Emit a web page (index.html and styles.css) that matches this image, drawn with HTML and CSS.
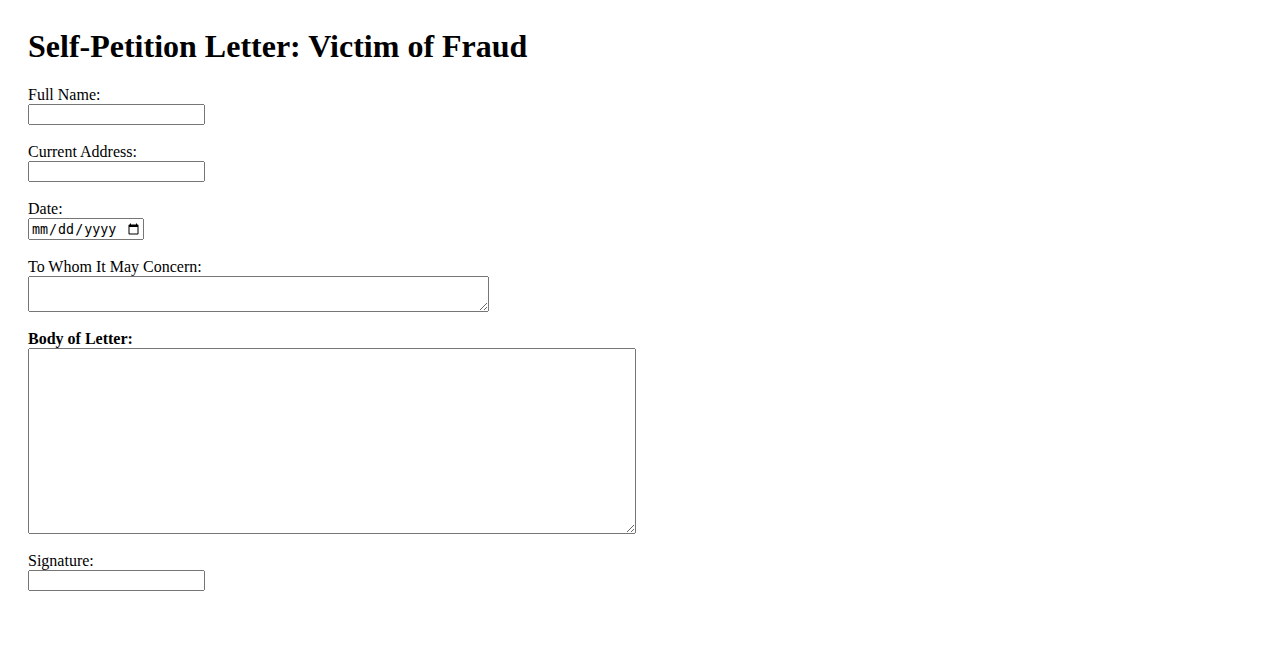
FILE: index.html
```html
<!DOCTYPE html>
<html lang="en">
<head>
<meta charset="utf-8">
<title>Self-Petition Letter: Victim of Fraud</title>
<link rel="stylesheet" href="styles.css">
</head>
<body>
<h1 class="title">Self-Petition Letter: Victim of Fraud</h1>
<form class="letter">
  <div class="field">
    <label class="label" for="fullname">Full Name:</label>
    <input class="text" type="text" id="fullname">
  </div>
  <div class="field">
    <label class="label" for="address">Current Address:</label>
    <input class="text" type="text" id="address">
  </div>
  <div class="field">
    <label class="label" for="date">Date:</label>
    <input class="date" type="date" id="date">
  </div>
  <div class="field">
    <label class="label" for="whom">To Whom It May Concern:</label>
    <textarea class="area area-short" id="whom" rows="2"></textarea>
  </div>
  <div class="field">
    <label class="label label-bold" for="body">Body of Letter:</label>
    <textarea class="area area-long" id="body" rows="12"></textarea>
  </div>
  <div class="field">
    <label class="label" for="signature">Signature:</label>
    <input class="text" type="text" id="signature">
  </div>
</form>
</body>
</html>
```

FILE: styles.css
```css
body {
  margin: 0;
  padding: 28px;
  font-family: "Liberation Serif", "Times New Roman", serif;
  font-size: 16px;
  color: #000;
  background: #fff;
}

.title {
  margin: 0 0 21.44px 0;
  font-size: 32px;
  font-weight: bold;
  line-height: 37px;
}

.letter {
  display: flex;
  flex-direction: column;
  gap: 18px;
}

.field {
  display: flex;
  flex-direction: column;
  align-items: flex-start;
}

.label {
  display: block;
  line-height: 18px;
}

.label-bold {
  font-weight: bold;
}

.text {
  width: 177px;
  height: 21px;
  box-sizing: border-box;
  margin: 0;
}

.date {
  width: 116px;
  height: 22px;
  box-sizing: border-box;
  margin: 0;
}

.area {
  box-sizing: border-box;
  margin: 0;
}

.area-short {
  width: 461px;
  height: 36px;
}

.area-long {
  width: 608px;
  height: 186px;
}
```
